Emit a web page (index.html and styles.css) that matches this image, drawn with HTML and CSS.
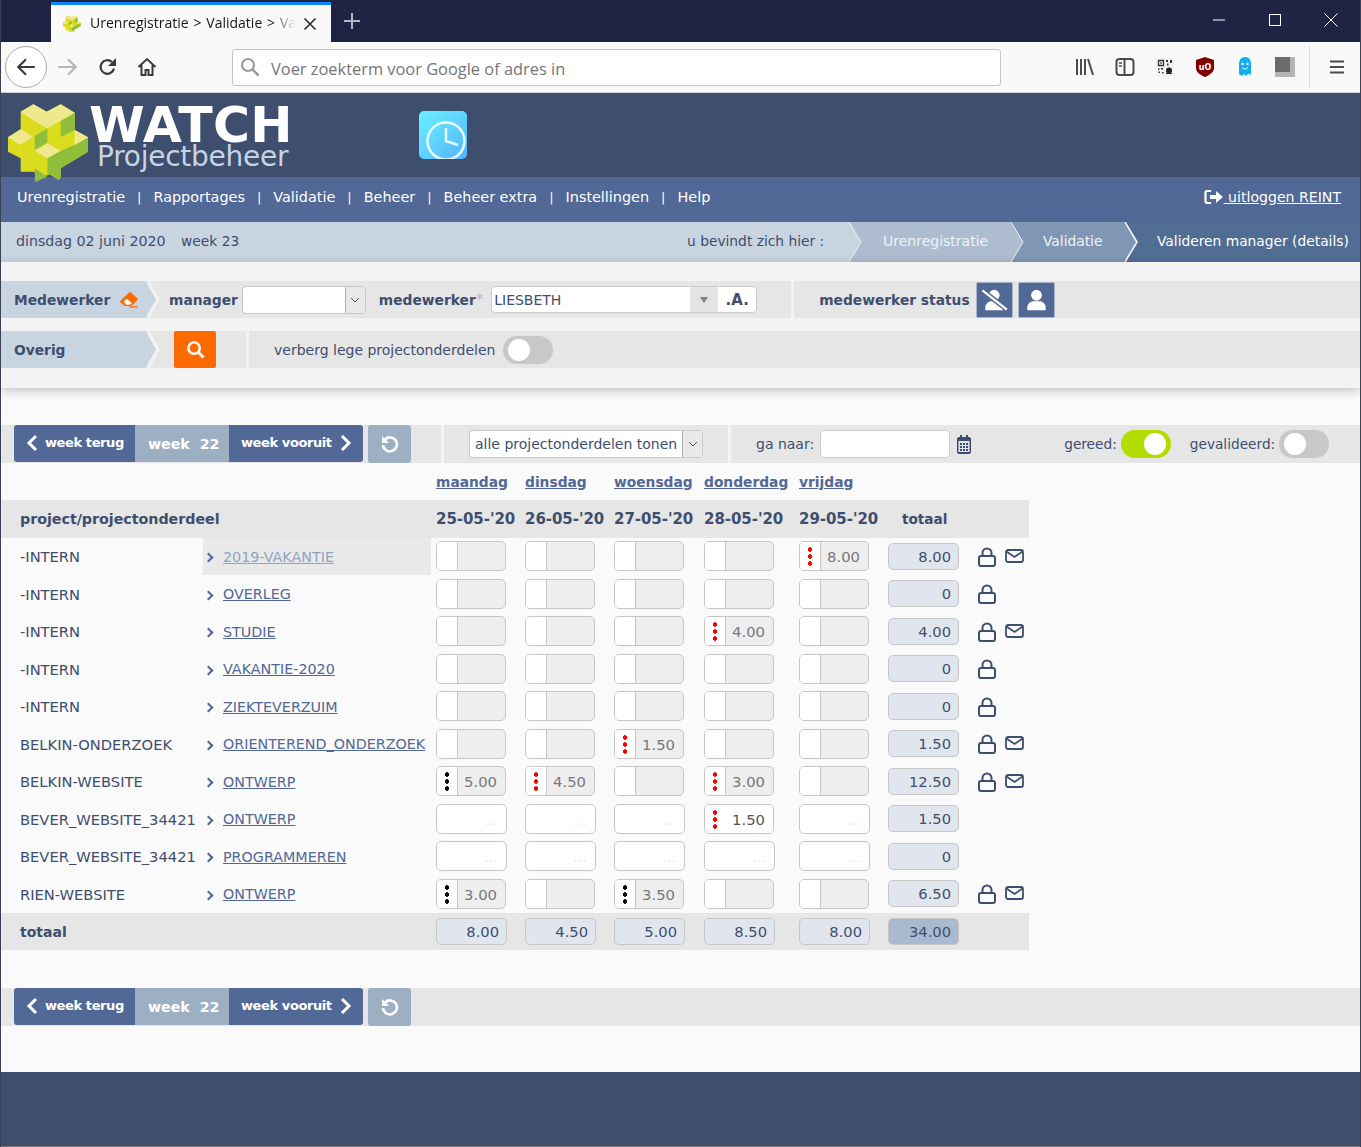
FILE: index.html
```html
<!DOCTYPE html>
<html lang="nl">
<head>
<meta charset="utf-8">
<title>Urenregistratie > Validatie > Valideren manager</title>
<link rel="stylesheet" href="styles.css">
</head>
<body>
<div class="window">
  <div class="tabstrip">
    <div class="tab">
      <svg class="tab-fav" viewBox="0 0 270 255"><path fill="#dcdc1e" d="M88 13l40 22 42-22 42 25v52l40 22v43l-82 50v27l-5 8-30-18-40 23-3-30-42-0v-40L12 155v-43l38-24V35z"/><path fill="#8fbf3a" d="M92 108l38-23v43l-38 22zM170 63l42-25v52l-42 22zM130 175l40-23 42-17 40-23v43l-82 50-40 23z"/><path fill="#f0e88c" d="M50 35l38-22 40 22 42-22 42 25-82 47-40-23zM12 112l38-24 38 22-40 25zM212 90l40 22-40 23zM92 152l38-22 40 22-40 23z"/></svg>
      <span class="tab-title">Urenregistratie &gt; Validatie &gt; Va</span>
      <svg class="tab-x" viewBox="0 0 14 14"><path d="M1.500 1.500l11 11M12.500 1.500l-11 11" stroke="#2a2a2e" stroke-width="1.600" fill="none"/></svg>
    </div>
    <svg class="tab-new" viewBox="0 0 18 18"><path d="M9 1v16M1 9h16" stroke="#b4b6c2" stroke-width="2" fill="none"/></svg>
    <div class="winctl">
      <svg viewBox="0 0 14 14"><path d="M1 7h12" stroke="#fff" fill="none"/></svg>
      <svg viewBox="0 0 14 14"><rect x="1.500" y="1.500" width="11" height="11" stroke="#fff" fill="none"/></svg>
      <svg viewBox="0 0 14 14"><path d="M.5.5l13 13M13.500.5l-13 13" stroke="#fff" fill="none"/></svg>
    </div>
  </div>

  <div class="navbar">
    <div class="backbtn"><svg viewBox="0 0 20 20"><path d="M18 10H3M10 3l-7 7 7 7" stroke="#3b3b3f" stroke-width="2" fill="none"/></svg></div>
    <svg class="tb-icon fwd" viewBox="0 0 20 20"><path d="M1 10h16M10 3l7 7-7 7" stroke="#b6b6b8" stroke-width="2" fill="none"/></svg>
    <svg class="tb-icon reload" viewBox="0 0 20 20"><path d="M16 11.500A6.800 6.800 0 1 1 14 5" stroke="#3b3b3f" stroke-width="2.200" fill="none"/><path d="M18 1v8h-8z" fill="#3b3b3f"/></svg>
    <svg class="tb-icon home" viewBox="0 0 20 20"><path d="M1.500 10L10 2l8.500 8M4.500 8v10h4v-5h3v5h4V8" stroke="#3b3b3f" stroke-width="2" fill="none"/></svg>
    <div class="urlbar">
      <svg viewBox="0 0 20 20"><circle cx="8" cy="8" r="6" stroke="#9a9a9c" stroke-width="2.200" fill="none"/><path d="M12.500 12.500l6 6" stroke="#9a9a9c" stroke-width="2.600" fill="none"/></svg>
      <span>Voer zoekterm voor Google of adres in</span>
    </div>
    <div class="ext">
      <svg class="e1" viewBox="0 0 20 20"><path d="M2 2v16M6 2v16M10 2v16M13 2l5 16" stroke="#4a4a4f" stroke-width="2" fill="none"/></svg>
      <svg class="e2" viewBox="0 0 20 20"><rect x="1.500" y="2" width="17" height="16" rx="3" stroke="#4a4a4f" stroke-width="2" fill="none"/><path d="M9.500 2v16" stroke="#4a4a4f" stroke-width="2"/><path d="M4 6h3M4 9h3" stroke="#4a4a4f" stroke-width="1.500"/></svg>
      <svg class="e3" viewBox="0 0 20 20"><rect x=".5" y=".5" width="19" height="19" fill="#f2f2f2"/><path d="M3.500 3.500h5v5h-5z" fill="none" stroke="#333" stroke-width="1.300"/><path d="M5.300 5.300h1.500v1.500H5.300zM11 3h2v2h-2zM15 3h2v3h-2zM12 6.500h1.500v2H12zM3 11.500h1.500V13H3zM6 11h2v1.500H6zM3.500 14.500H5V16H3.500zM7 15h1.500v1.500H7z" fill="#333"/><circle cx="14" cy="13.500" r="3" fill="#222"/><path d="M11 16.500h6" stroke="#222"/></svg>
      <svg class="e4" viewBox="0 0 20 20"><path d="M10 0l9 3v8c0 4-4 7-9 9-5-2-9-5-9-9V3z" fill="#800000"/><text x="10" y="13" class="ublock">uO</text></svg>
      <svg class="e5" viewBox="0 0 20 20"><path d="M10 0c4 0 6 3 6 7v11l-2.500-1.500L11 19l-2-2-2.500 2L4 17V7c0-4 2-7 6-7z" fill="#0fb0f0"/><circle cx="7.500" cy="7" r="1.200" fill="#fff"/><circle cx="12.500" cy="7" r="1.200" fill="#fff"/><path d="M7 10.500c2 2 4 2 6 0" stroke="#fff" fill="none"/></svg>
      <svg class="e6" viewBox="0 0 20 20"><rect width="20" height="20" fill="#b4b4b4"/><rect width="15" height="15" fill="#6b6b6b"/></svg>
      <i class="ext-sep"></i>
      <svg class="e7" viewBox="0 0 16 16"><path d="M1 2.500h14M1 8h14M1 13.500h14" stroke="#4a4a4f" stroke-width="2" fill="none"/></svg>
    </div>
  </div>

  <header class="masthead">
    <svg class="logo" viewBox="0 0 270 255">
      <path fill="#dcdc1e" d="M88 13l40 22 42-22 42 25v52l40 22v43l-82 50v27l-5 8-30-18-40 23-3-30-42-0v-40L12 155v-43l38-24V35z"/>
      <path fill="#8fbf3a" d="M92 108l38-23v43l-38 22zM170 63l42-25v52l-42 22zM130 175l40-23 42-17 40-23v43l-82 50-40 23zM92 205l38 25-35 15zM135 222l35-17v27l-5 8z"/>
      <path fill="#f0e88c" d="M50 35l38-22 40 22 42-22 42 25-82 47-40-23zM12 112l38-24 38 22-40 25zM212 90l40 22-40 23zM92 152l38-22 40 22-40 23z"/>
    </svg>
    <div class="brand">
      <div class="brand-a">WATCH</div>
      <div class="brand-b">Projectbeheer</div>
    </div>
    <svg class="clock" viewBox="0 0 48 48">
      <defs>
        <linearGradient id="clk" x1="0" y1="0" x2="1" y2="1"><stop offset="0" stop-color="#68f2ff"/><stop offset="1" stop-color="#57b2ff"/></linearGradient>
        <clipPath id="clkc"><rect width="48" height="48" rx="5"/></clipPath>
      </defs>
      <rect width="48" height="48" rx="5" fill="url(#clk)"/>
      <g clip-path="url(#clkc)" fill="none" stroke="#e6fbff" stroke-width="2.500">
        <circle cx="27" cy="30" r="18.500"/>
        <path d="M27 17v13l12 4"/>
      </g>
    </svg>
  </header>

  <nav class="mainnav">
    <a>Urenregistratie</a><i>|</i><a>Rapportages</a><i>|</i><a>Validatie</a><i>|</i><a>Beheer</a><i>|</i><a>Beheer extra</a><i>|</i><a>Instellingen</a><i>|</i><a>Help</a>
    <span class="logout">
      <svg viewBox="0 0 20 16"><path d="M7 2H3a1.500 1.500 0 0 0-1.500 1.500v9A1.500 1.500 0 0 0 3 14h4" stroke="#fff" stroke-width="2.200" fill="none"/><path d="M6 6h6V2l7 6-7 6v-4H6z" fill="#fff"/></svg>
      <u>&nbsp;uitloggen REINT</u>
    </span>
  </nav>

  <div class="crumbs">
    <span class="today">dinsdag 02 juni 2020</span><span class="weekno">week 23</span>
    <span class="here">u bevindt zich hier :</span>
    <svg class="chev" viewBox="0 0 13 40"><path d="M0 0l12 20L0 40z" fill="#c9d4e1"/><path d="M0 0l12 20L0 40" stroke="#eef1f5" fill="none"/></svg>
    <span class="seg s1">Urenregistratie</span>
    <svg class="chev c2" viewBox="0 0 13 40"><path d="M0 0l12 20L0 40z" fill="#adbccf"/><path d="M0 0l12 20L0 40" stroke="#eef1f5" fill="none"/></svg>
    <span class="seg s2">Validatie</span>
    <svg class="chev c3" viewBox="0 0 13 40"><path d="M0 0l12 20L0 40z" fill="#7f97b5"/><path d="M0 0l12 20L0 40" stroke="#fff" stroke-width="1.500" fill="none"/></svg>
    <span class="seg s3">Valideren manager (details)</span>
  </div>

  <section class="filters">
    <div class="frow">
      <div class="flabel">Medewerker
        <svg viewBox="28 30 62 52"><path d="M62 32l26 23-22 21H45L30 62z" fill="#ff6a00"/><path d="M43 62l9-8 16 14-6 4H50z" fill="#fff"/><path d="M60 79h26" stroke="#ff6a00" stroke-width="4" fill="none"/></svg>
      </div>
      <svg class="fchev" viewBox="0 0 13 37"><path d="M0 0l10 18.500L0 37" stroke="#f3f3f3" stroke-width="3" fill="none"/></svg>
      <b class="f-manager">manager</b>
      <div class="sel sel-m"><span></span><em><svg viewBox="0 0 10 6"><path d="M1 1l4 4 4-4" stroke="#555" fill="none"/></svg></em></div>
      <b class="f-mw">medewerker<sup>*</sup></b>
      <div class="combo"><span>LIESBETH</span><em><svg viewBox="0 0 10 6"><path d="M1 0h8L5 6z" fill="#808080"/></svg></em><strong>.A.</strong></div>
      <i class="fsep s-a"></i>
      <b class="f-status">medewerker status</b>
      <div class="sq"><svg viewBox="0 0 110 106"><circle cx="54" cy="38" r="17" fill="#fff"/><path d="M26 85v-8c0-12 10-20 20-20h18c10 0 20 8 20 20v8z" fill="#fff"/><path d="M17 23l77 60" stroke="#526896" stroke-width="16" fill="none"/><path d="M17 23l77 60" stroke="#fff" stroke-width="7" fill="none"/></svg></div>
      <div class="sq"><svg viewBox="0 0 110 106"><circle cx="55" cy="38" r="17" fill="#fff"/><path d="M26 85v-8c0-12 10-20 20-20h18c10 0 20 8 20 20v8z" fill="#fff"/></svg></div>
    </div>
    <div class="frow second">
      <div class="flabel">Overig</div>
      <svg class="fchev" viewBox="0 0 13 37"><path d="M0 0l10 18.500L0 37" stroke="#f3f3f3" stroke-width="3" fill="none"/></svg>
      <div class="searchbtn"><svg viewBox="0 0 20 20"><circle cx="8.500" cy="8.500" r="6" stroke="#fff" stroke-width="2.600" fill="none"/><path d="M13 13l5.500 5.500" stroke="#fff" stroke-width="3" fill="none"/></svg></div>
      <i class="fsep s-b"></i>
      <span class="hide-empty">verberg lege projectonderdelen</span>
      <i class="toggle"></i>
    </div>
  </section>

  <main class="content">
    <div class="tools">
      <div class="wk back"><svg viewBox="0 0 12 18"><path d="M10 2L3 9l7 7" stroke="#fff" stroke-width="3" fill="none"/></svg>week terug</div>
      <div class="wk now">week&nbsp;&nbsp;22</div>
      <div class="wk next">week vooruit<svg viewBox="0 0 12 18"><path d="M2 2l7 7-7 7" stroke="#fff" stroke-width="3" fill="none"/></svg></div>
      <div class="undo"><svg viewBox="0 0 20 20"><path d="M5 5.500A7 7 0 1 1 3 11" stroke="#fff" stroke-width="2.600" fill="none"/><path d="M2 2v7h7z" fill="#fff"/></svg></div>
      <i class="tsep t1"></i>
      <div class="sel sel-all"><span>alle projectonderdelen tonen</span><em><svg viewBox="0 0 10 6"><path d="M1 1l4 4 4-4" stroke="#555" fill="none"/></svg></em></div>
      <i class="tsep t2"></i>
      <span class="goto">ga naar:</span>
      <div class="dateinput"></div>
      <svg class="cal" viewBox="0 0 16 20"><path d="M1 5a2 2 0 0 1 2-2h1V1h2v2h4V1h2v2h1a2 2 0 0 1 2 2v13a2 2 0 0 1-2 2H3a2 2 0 0 1-2-2z" fill="#3e4e6e"/><rect x="2.500" y="7" width="11" height="11" fill="#e6e6e6"/><path d="M4 9h2v2H4zM7 9h2v2H7zM10 9h2v2h-2zM4 12h2v2H4zM7 12h2v2H7zM10 12h2v2h-2zM4 15h2v2H4zM7 15h2v2H7zM10 15h2v2h-2z" fill="#3e4e6e"/></svg>
      <span class="lbl-gereed">gereed:</span>
      <i class="toggle on"></i>
      <span class="lbl-gev">gevalideerd:</span>
      <i class="toggle"></i>
    </div>

    <div class="grid days">
      <span></span><span></span><a>maandag</a><a>dinsdag</a><a>woensdag</a><a>donderdag</a><a>vrijdag</a>
    </div>
    <div class="grid head">
      <b class="th-proj">project/projectonderdeel</b><span></span><b>25-05-'20</b><b>26-05-'20</b><b>27-05-'20</b><b>28-05-'20</b><b>29-05-'20</b><b class="th-tot">totaal</b>
    </div>

    <div class="grid row">
      <span>-INTERN</span><a class="part active">2019-VAKANTIE</a>
      <div class="c"><i></i><span>...</span></div><div class="c"><i></i><span>...</span></div><div class="c"><i></i><span>...</span></div><div class="c"><i></i><span>...</span></div><div class="c"><i class="red"></i><span class="v">8.00</span></div>
      <div class="t">8.00</div>
      <div class="acts"><svg class="lock" viewBox="0 0 18 20"><path d="M4.500 9V6a4.500 4.500 0 0 1 9 0v3" fill="none"/><rect x="1" y="9" width="16" height="10" rx="2" fill="none"/></svg><svg class="mail" viewBox="0 0 19 14"><rect x="1" y="1" width="17" height="12" rx="2" fill="none"/><path d="M1.500 2.500L9.500 8l8-5.500" fill="none"/></svg></div>
    </div>
    <div class="grid row">
      <span>-INTERN</span><a class="part">OVERLEG</a>
      <div class="c"><i></i><span>...</span></div><div class="c"><i></i><span>...</span></div><div class="c"><i></i><span>...</span></div><div class="c"><i></i><span>...</span></div><div class="c"><i></i><span>...</span></div>
      <div class="t">0</div>
      <div class="acts"><svg class="lock" viewBox="0 0 18 20"><path d="M4.500 9V6a4.500 4.500 0 0 1 9 0v3" fill="none"/><rect x="1" y="9" width="16" height="10" rx="2" fill="none"/></svg></div>
    </div>
    <div class="grid row">
      <span>-INTERN</span><a class="part">STUDIE</a>
      <div class="c"><i></i><span>...</span></div><div class="c"><i></i><span>...</span></div><div class="c"><i></i><span>...</span></div><div class="c"><i class="red"></i><span class="v">4.00</span></div><div class="c"><i></i><span>...</span></div>
      <div class="t">4.00</div>
      <div class="acts"><svg class="lock" viewBox="0 0 18 20"><path d="M4.500 9V6a4.500 4.500 0 0 1 9 0v3" fill="none"/><rect x="1" y="9" width="16" height="10" rx="2" fill="none"/></svg><svg class="mail" viewBox="0 0 19 14"><rect x="1" y="1" width="17" height="12" rx="2" fill="none"/><path d="M1.500 2.500L9.500 8l8-5.500" fill="none"/></svg></div>
    </div>
    <div class="grid row">
      <span>-INTERN</span><a class="part">VAKANTIE-2020</a>
      <div class="c"><i></i><span>...</span></div><div class="c"><i></i><span>...</span></div><div class="c"><i></i><span>...</span></div><div class="c"><i></i><span>...</span></div><div class="c"><i></i><span>...</span></div>
      <div class="t">0</div>
      <div class="acts"><svg class="lock" viewBox="0 0 18 20"><path d="M4.500 9V6a4.500 4.500 0 0 1 9 0v3" fill="none"/><rect x="1" y="9" width="16" height="10" rx="2" fill="none"/></svg></div>
    </div>
    <div class="grid row">
      <span>-INTERN</span><a class="part">ZIEKTEVERZUIM</a>
      <div class="c"><i></i><span>...</span></div><div class="c"><i></i><span>...</span></div><div class="c"><i></i><span>...</span></div><div class="c"><i></i><span>...</span></div><div class="c"><i></i><span>...</span></div>
      <div class="t">0</div>
      <div class="acts"><svg class="lock" viewBox="0 0 18 20"><path d="M4.500 9V6a4.500 4.500 0 0 1 9 0v3" fill="none"/><rect x="1" y="9" width="16" height="10" rx="2" fill="none"/></svg></div>
    </div>
    <div class="grid row">
      <span>BELKIN-ONDERZOEK</span><a class="part">ORIENTEREND_ONDERZOEK</a>
      <div class="c"><i></i><span>...</span></div><div class="c"><i></i><span>...</span></div><div class="c"><i class="red"></i><span class="v">1.50</span></div><div class="c"><i></i><span>...</span></div><div class="c"><i></i><span>...</span></div>
      <div class="t">1.50</div>
      <div class="acts"><svg class="lock" viewBox="0 0 18 20"><path d="M4.500 9V6a4.500 4.500 0 0 1 9 0v3" fill="none"/><rect x="1" y="9" width="16" height="10" rx="2" fill="none"/></svg><svg class="mail" viewBox="0 0 19 14"><rect x="1" y="1" width="17" height="12" rx="2" fill="none"/><path d="M1.500 2.500L9.500 8l8-5.500" fill="none"/></svg></div>
    </div>
    <div class="grid row">
      <span>BELKIN-WEBSITE</span><a class="part">ONTWERP</a>
      <div class="c"><i class="blk"></i><span class="v">5.00</span></div><div class="c"><i class="red"></i><span class="v">4.50</span></div><div class="c"><i></i><span>...</span></div><div class="c"><i class="red"></i><span class="v">3.00</span></div><div class="c"><i></i><span>...</span></div>
      <div class="t">12.50</div>
      <div class="acts"><svg class="lock" viewBox="0 0 18 20"><path d="M4.500 9V6a4.500 4.500 0 0 1 9 0v3" fill="none"/><rect x="1" y="9" width="16" height="10" rx="2" fill="none"/></svg><svg class="mail" viewBox="0 0 19 14"><rect x="1" y="1" width="17" height="12" rx="2" fill="none"/><path d="M1.500 2.500L9.500 8l8-5.500" fill="none"/></svg></div>
    </div>
    <div class="grid row">
      <span>BEVER_WEBSITE_34421</span><a class="part">ONTWERP</a>
      <div class="c open"><span>...</span></div><div class="c open"><span>...</span></div><div class="c open"><span>...</span></div><div class="c"><i class="red white"></i><span class="v white">1.50</span></div><div class="c open"><span>...</span></div>
      <div class="t">1.50</div>
    </div>
    <div class="grid row">
      <span>BEVER_WEBSITE_34421</span><a class="part">PROGRAMMEREN</a>
      <div class="c open"><span>...</span></div><div class="c open"><span>...</span></div><div class="c open"><span>...</span></div><div class="c open"><span>...</span></div><div class="c open"><span>...</span></div>
      <div class="t">0</div>
    </div>
    <div class="grid row">
      <span>RIEN-WEBSITE</span><a class="part">ONTWERP</a>
      <div class="c"><i class="blk"></i><span class="v">3.00</span></div><div class="c"><i></i><span>...</span></div><div class="c"><i class="blk"></i><span class="v">3.50</span></div><div class="c"><i></i><span>...</span></div><div class="c"><i></i><span>...</span></div>
      <div class="t">6.50</div>
      <div class="acts"><svg class="lock" viewBox="0 0 18 20"><path d="M4.500 9V6a4.500 4.500 0 0 1 9 0v3" fill="none"/><rect x="1" y="9" width="16" height="10" rx="2" fill="none"/></svg><svg class="mail" viewBox="0 0 19 14"><rect x="1" y="1" width="17" height="12" rx="2" fill="none"/><path d="M1.500 2.500L9.500 8l8-5.500" fill="none"/></svg></div>
    </div>
    <div class="grid foot">
      <b>totaal</b><span></span>
      <div class="t">8.00</div><div class="t">4.50</div><div class="t">5.00</div><div class="t">8.50</div><div class="t">8.00</div><div class="t sum">34.00</div>
    </div>

    <div class="tools bottom">
      <div class="wk back"><svg viewBox="0 0 12 18"><path d="M10 2L3 9l7 7" stroke="#fff" stroke-width="3" fill="none"/></svg>week terug</div>
      <div class="wk now">week&nbsp;&nbsp;22</div>
      <div class="wk next">week vooruit<svg viewBox="0 0 12 18"><path d="M2 2l7 7-7 7" stroke="#fff" stroke-width="3" fill="none"/></svg></div>
      <div class="undo"><svg viewBox="0 0 20 20"><path d="M5 5.500A7 7 0 1 1 3 11" stroke="#fff" stroke-width="2.600" fill="none"/><path d="M2 2v7h7z" fill="#fff"/></svg></div>
    </div>
  </main>

  <footer class="pagefoot"></footer>
</div>
</body>
</html>
```

FILE: styles.css
```css
* { box-sizing: border-box; }
html, body { margin: 0; padding: 0; height: 1147px; overflow: hidden; }
body { font-family: "DejaVu Sans", Verdana, sans-serif; font-size: 14px; color: #3e4e6e; background: #fafafa; }
i, em { font-style: normal; display: block; }
svg { display: block; flex: none; }

.window { height: 1147px; display: flex; flex-direction: column; border-left: 1px solid #3a4056; border-right: 1px solid #3a4056; overflow: hidden; }

/* browser chrome */
.tabstrip { height: 42px; flex: none; background: #1f2444; display: flex; align-items: flex-start; padding: 2px 0 0 50px; }
.tab { width: 280px; height: 40px; background: #f9f9fa; border-top: 3px solid #0a84ff; display: flex; align-items: center; padding: 0 14px 3px 11px; color: #18181a; font-family: "Open Sans", sans-serif; }
.tab-fav { width: 20px; height: 20px; margin-top: 3px; }
.tab-title { margin-left: 8px; width: 207px; white-space: nowrap; overflow: hidden; font-size: 14px; word-spacing: 1.200px; -webkit-mask-image: linear-gradient(to right, #000 88%, transparent); mask-image: linear-gradient(to right, #000 88%, transparent); }
.tab-x { width: 14px; height: 14px; margin: 3px 0 0 7px; }
.tab-new { width: 18px; height: 18px; margin: 10px 0 0 12px; }
.winctl { margin-left: auto; display: flex; gap: 42px; padding: 11px 22px 0 0; }
.winctl svg { width: 14px; height: 14px; }

.navbar { height: 51px; flex: none; background: #f9f9fa; border-bottom: 1px solid #d0d0d2; display: flex; align-items: center; padding-left: 4px; }
.backbtn { width: 42px; height: 42px; border-radius: 50%; background: #fff; border: 1px solid #aaa; display: flex; align-items: center; justify-content: center; }
.backbtn svg { width: 22px; height: 22px; }
.tb-icon { width: 20px; height: 20px; }
.fwd { margin-left: 10px; width: 22px; height: 22px; }
.reload { margin-left: 19px; }
.home { margin-left: 19px; }
.urlbar { margin-left: 75px; width: 769px; height: 37px; background: #fff; border: 1px solid #c4c4c6; border-radius: 3px; display: flex; align-items: center; padding-left: 7px; color: #757578; font-family: "Open Sans", sans-serif; font-size: 16.400px; }
.urlbar svg { width: 20px; height: 20px; }
.urlbar span { margin: 3px 0 0 11px; }
.ext { display: flex; align-items: center; margin-left: 74px; }
.ext svg { width: 20px; height: 20px; }
.e2, .e3, .e4, .e5, .e6 { margin-left: 20px; }
.ublock { font-family: "DejaVu Sans", sans-serif; font-size: 8px; font-weight: 700; fill: #fff; text-anchor: middle; }
.ext-sep { width: 1px; height: 42px; background: #dcdcde; margin-left: 14px; }
.ext .e7 { width: 16px; height: 16px; margin-left: 19px; }

/* site header */
.masthead { height: 84px; flex: none; background: #3e4e6e; display: flex; align-items: flex-start; padding: 7px 0 0 3px; }
.logo { width: 90px; height: 85px; position: relative; z-index: 1; }
.brand { margin: 3px 0 0 -5px; color: #fff; width: 205px; }
.brand-a { font-weight: 700; font-size: 50.500px; line-height: 44px; letter-spacing: .3px; }
.brand-b { font-size: 28px; line-height: 26px; color: #c7d4e4; margin: -3px 0 0 8px; letter-spacing: -.25px; white-space: nowrap; }
.clock { width: 48px; height: 48px; margin: 11px 0 0 125px; }

.mainnav { height: 45px; flex: none; background: #526896; color: #fff; display: flex; align-items: center; padding: 0 19px 5px 16px; font-size: 14.400px; }
.mainnav i { margin: 0 12px; font-size: 13px; }
.logout { margin-left: auto; display: flex; align-items: center; font-size: 14.100px; }
.logout svg { width: 20px; height: 16px; }

.crumbs { height: 40px; flex: none; background: #c9d4e1; display: flex; align-items: center; padding: 0 0 2px 15px; font-size: 13.800px; }
.today { width: 165px; font-size: 14.200px; }
.here { margin-left: auto; width: 165px; padding-left: 3px; }
.chev { width: 13px; height: 40px; margin-bottom: -2px; background: #adbccf; }
.c2 { background: #7f97b5; }
.c3 { background: #526d94; }
.seg { height: 40px; margin-bottom: -2px; padding-bottom: 2px; display: flex; align-items: center; color: #f0f4f8; }
.s1 { background: #adbccf; width: 149px; padding-left: 21px; font-size: 14px; }
.s2 { background: #7f97b5; width: 101px; padding-left: 19px; }
.s3 { background: #526d94; width: 222px; padding-left: 19px; color: #fff; }

/* filters */
.filters { height: 126px; flex: none; background: #f3f3f3; padding-top: 19px; box-shadow: 0 3px 10px rgba(0,0,0,.22); position: relative; }
.frow { height: 37px; background: #e6e6e6; display: flex; align-items: center; font-size: 13.800px; }
.frow.second { margin-top: 13px; }
.flabel { width: 144px; height: 37px; background: #c9d4e1; display: flex; align-items: center; padding-left: 13px; font-weight: 700; color: #3e4e6e; position: relative; }
.flabel svg { width: 20px; height: 17px; margin-left: 9px; }
.flabel::after { content: ""; position: absolute; left: 144px; top: 0; width: 11px; height: 37px; background: #c9d4e1; clip-path: polygon(0 0, 100% 50%, 0 100%); }
.fchev { width: 13px; height: 37px; position: relative; left: 3px; }
b { font-weight: 700; }
.f-manager { margin-left: 11px; }
.sel { display: flex; background: #fff; border: 1px solid #c8c8c8; border-radius: 4px; overflow: hidden; align-items: stretch; }
.sel span { flex: 1; padding-left: 5px; display: flex; align-items: center; }
.sel em { width: 20px; background: #e9e9e9; border-left: 1px solid #b0b0b0; display: flex; align-items: center; justify-content: center; }
.sel em svg { width: 10px; height: 6px; }
.sel-m { width: 124px; height: 28px; margin-left: 4px; }
.f-mw { margin-left: 13px; }
.f-mw sup { color: #a9bccf; font-weight: 400; line-height: 0; font-size: 15px; vertical-align: baseline; }
.combo { width: 266px; height: 27px; margin-left: 8px; display: flex; background: #fff; border: 1px solid #ccc; border-radius: 4px; overflow: hidden; align-items: stretch; }
.combo span { width: 198px; padding-left: 2px; display: flex; align-items: center; color: #3e4e6e; font-size: 14px; }
.combo em { width: 28px; background: #e4e4e4; display: flex; align-items: center; justify-content: center; }
.combo em svg { width: 10px; height: 6px; }
.combo strong { flex: 1; display: flex; align-items: center; justify-content: center; font-size: 15px; }
.fsep { width: 3px; background: #f3f3f3; height: 100%; }
.s-a { margin-left: 34px; }
.f-status { margin-left: 25px; }
.sq { width: 37px; height: 36px; background: #526896; border: 1px solid #a9b5c8; border-radius: 2px; margin-left: 6px; }
.sq svg { width: 100%; height: 100%; }
.sq + .sq { margin-left: 5px; }
.searchbtn { width: 42px; height: 37px; background: #ff6a00; border-radius: 2px; margin-left: 16px; display: flex; align-items: center; justify-content: center; }
.searchbtn svg { width: 19px; height: 19px; }
.s-b { margin-left: 30px; }
.hide-empty { margin-left: 25px; font-size: 14px; }
.toggle { width: 50px; height: 28px; border-radius: 14px; background: #c8c8c8; position: relative; }
.toggle::after { content: ""; position: absolute; left: 5px; top: 3px; width: 22px; height: 22px; border-radius: 50%; background: #fff; }
.toggle.on { background: #b4dc00; }
.toggle.on::after { left: 23px; }
.second .toggle { margin-left: 8px; }

/* content */
.content { flex: 1; background: #fafafa; padding-top: 37px; }
.tools { height: 38px; background: #e6e6e6; display: flex; align-items: stretch; padding-left: 13px; color: #3e4e6e; }
.wk { display: flex; align-items: center; color: #fff; font-weight: 700; font-size: 13px; height: 37px; letter-spacing: -.4px; padding-bottom: 2px; }
.wk svg { width: 12px; height: 18px; }
.back { width: 121px; background: #526896; border-radius: 3px 0 0 3px; padding-left: 12px; gap: 7px; }
.now { width: 94px; background: #9dafc3; padding: 0 0 0 13px; font-size: 14.200px; letter-spacing: 0; }
.next { width: 134px; background: #526896; border-radius: 0 3px 3px 0; padding-left: 12px; gap: 8px; }
.undo { width: 43px; height: 38px; background: #9dafc3; border-radius: 3px; margin-left: 5px; display: flex; align-items: center; justify-content: center; }
.undo svg { width: 20px; height: 20px; }
.tsep { width: 3px; background: #f3f3f3; }
.t1 { margin-left: 30px; }
.sel-all { width: 234px; height: 28px; margin: 5px 0 0 25px; }
.sel-all span { padding-left: 5px; white-space: nowrap; }
.t2 { margin-left: 25px; }
.goto { margin-left: 25px; align-self: center; }
.dateinput { width: 130px; height: 28px; background: #fff; border: 1px solid #ccc; border-radius: 4px; margin: 5px 0 0 6px; }
.cal { width: 16px; height: 20px; align-self: center; margin-left: 6px; }
.lbl-gereed { margin-left: 92px; align-self: center; font-size: 13.700px; }
.tools .toggle { margin: 5px 0 0 4px; }
.lbl-gev { margin-left: 19px; align-self: center; font-size: 13.700px; }
.tools.bottom { margin-top: 38px; }

.grid { display: grid; grid-template-columns: 183px 233px 89px 89px 90px 95px 89px 71px 70px; padding-left: 19px; width: 1028px; align-items: center; }
.days { height: 37px; font-weight: 700; font-size: 13.800px; }
.days a { color: #526896; text-decoration: underline; }
.head { height: 38px; background: #e6e6e6; font-size: 15px; letter-spacing: -.05px; }
.th-proj { font-size: 14.300px; white-space: nowrap; }
.th-tot { padding-left: 14px; font-size: 13.700px; }
.row { height: 37.500px; font-size: 14.700px; }
.row > span { height: 37px; display: flex; align-items: center; white-space: nowrap; margin-top: -.4px; }
.part { height: 37px; margin-right: 5px; color: #526896; text-decoration: underline; display: flex; align-items: center; padding-left: 20px; position: relative; white-space: nowrap; font-size: 14.300px; }
.part::before { content: ""; position: absolute; left: 2px; top: 16px; width: 5px; height: 5px; border-top: 2px solid #526896; border-right: 2px solid #526896; transform: rotate(45deg); }
.part.active { background: #e9e9e9; color: #8fa3bf; }
.c { width: 70px; height: 30px; background: #eee; border: 1px solid #c6c6c6; border-radius: 5px; display: flex; overflow: hidden; color: #77787a; font-size: 14.800px; }
.row .c { align-self: start; margin-top: 3px; }
.c i { width: 21px; background: #fff; border-right: 1px solid #c6c6c6; flex: none; position: relative; }
.c i.red::after, .c i.blk::after { content: ""; position: absolute; left: 8px; top: 4px; width: 4px; height: 20px; background: radial-gradient(circle, #f00 2px, transparent 2.400px) 0 0 / 4px 7px repeat-y; }
.c i.blk::after { background-image: radial-gradient(circle, #000 2px, transparent 2.400px); }
.c i.white { border-right: none; }
.c span { flex: 1; text-align: right; padding-right: 8px; line-height: 30px; color: #e2ebf3; white-space: nowrap; }
.c span.v { color: #77787a; }
.c span.v.white { background: #fff; color: #555; }
.c.open { width: 71px; background: #fff; }
.t { width: 71px; height: 27px; background: #e1e6ee; border: 1px solid #c6c6c6; border-radius: 5px; text-align: right; padding-right: 7px; line-height: 25.500px; font-size: 14.700px; color: #3e4e6e; }
.row .t { align-self: start; margin-top: 4.900px; }
.t.sum { background: #a9b9d0; }
.acts { display: flex; align-items: center; padding-left: 19px; gap: 9px; }
.lock { width: 18px; height: 20px; stroke: #3e4e6e; stroke-width: 2; }
.mail { width: 19px; height: 14px; stroke: #3e4e6e; stroke-width: 1.800; margin-top: -2px; }
.foot { height: 37px; background: #e6e6e6; font-size: 14px; }

.pagefoot { height: 75px; flex: none; background: #3e4e6e; border-bottom: 1px solid #77797d; }
```
